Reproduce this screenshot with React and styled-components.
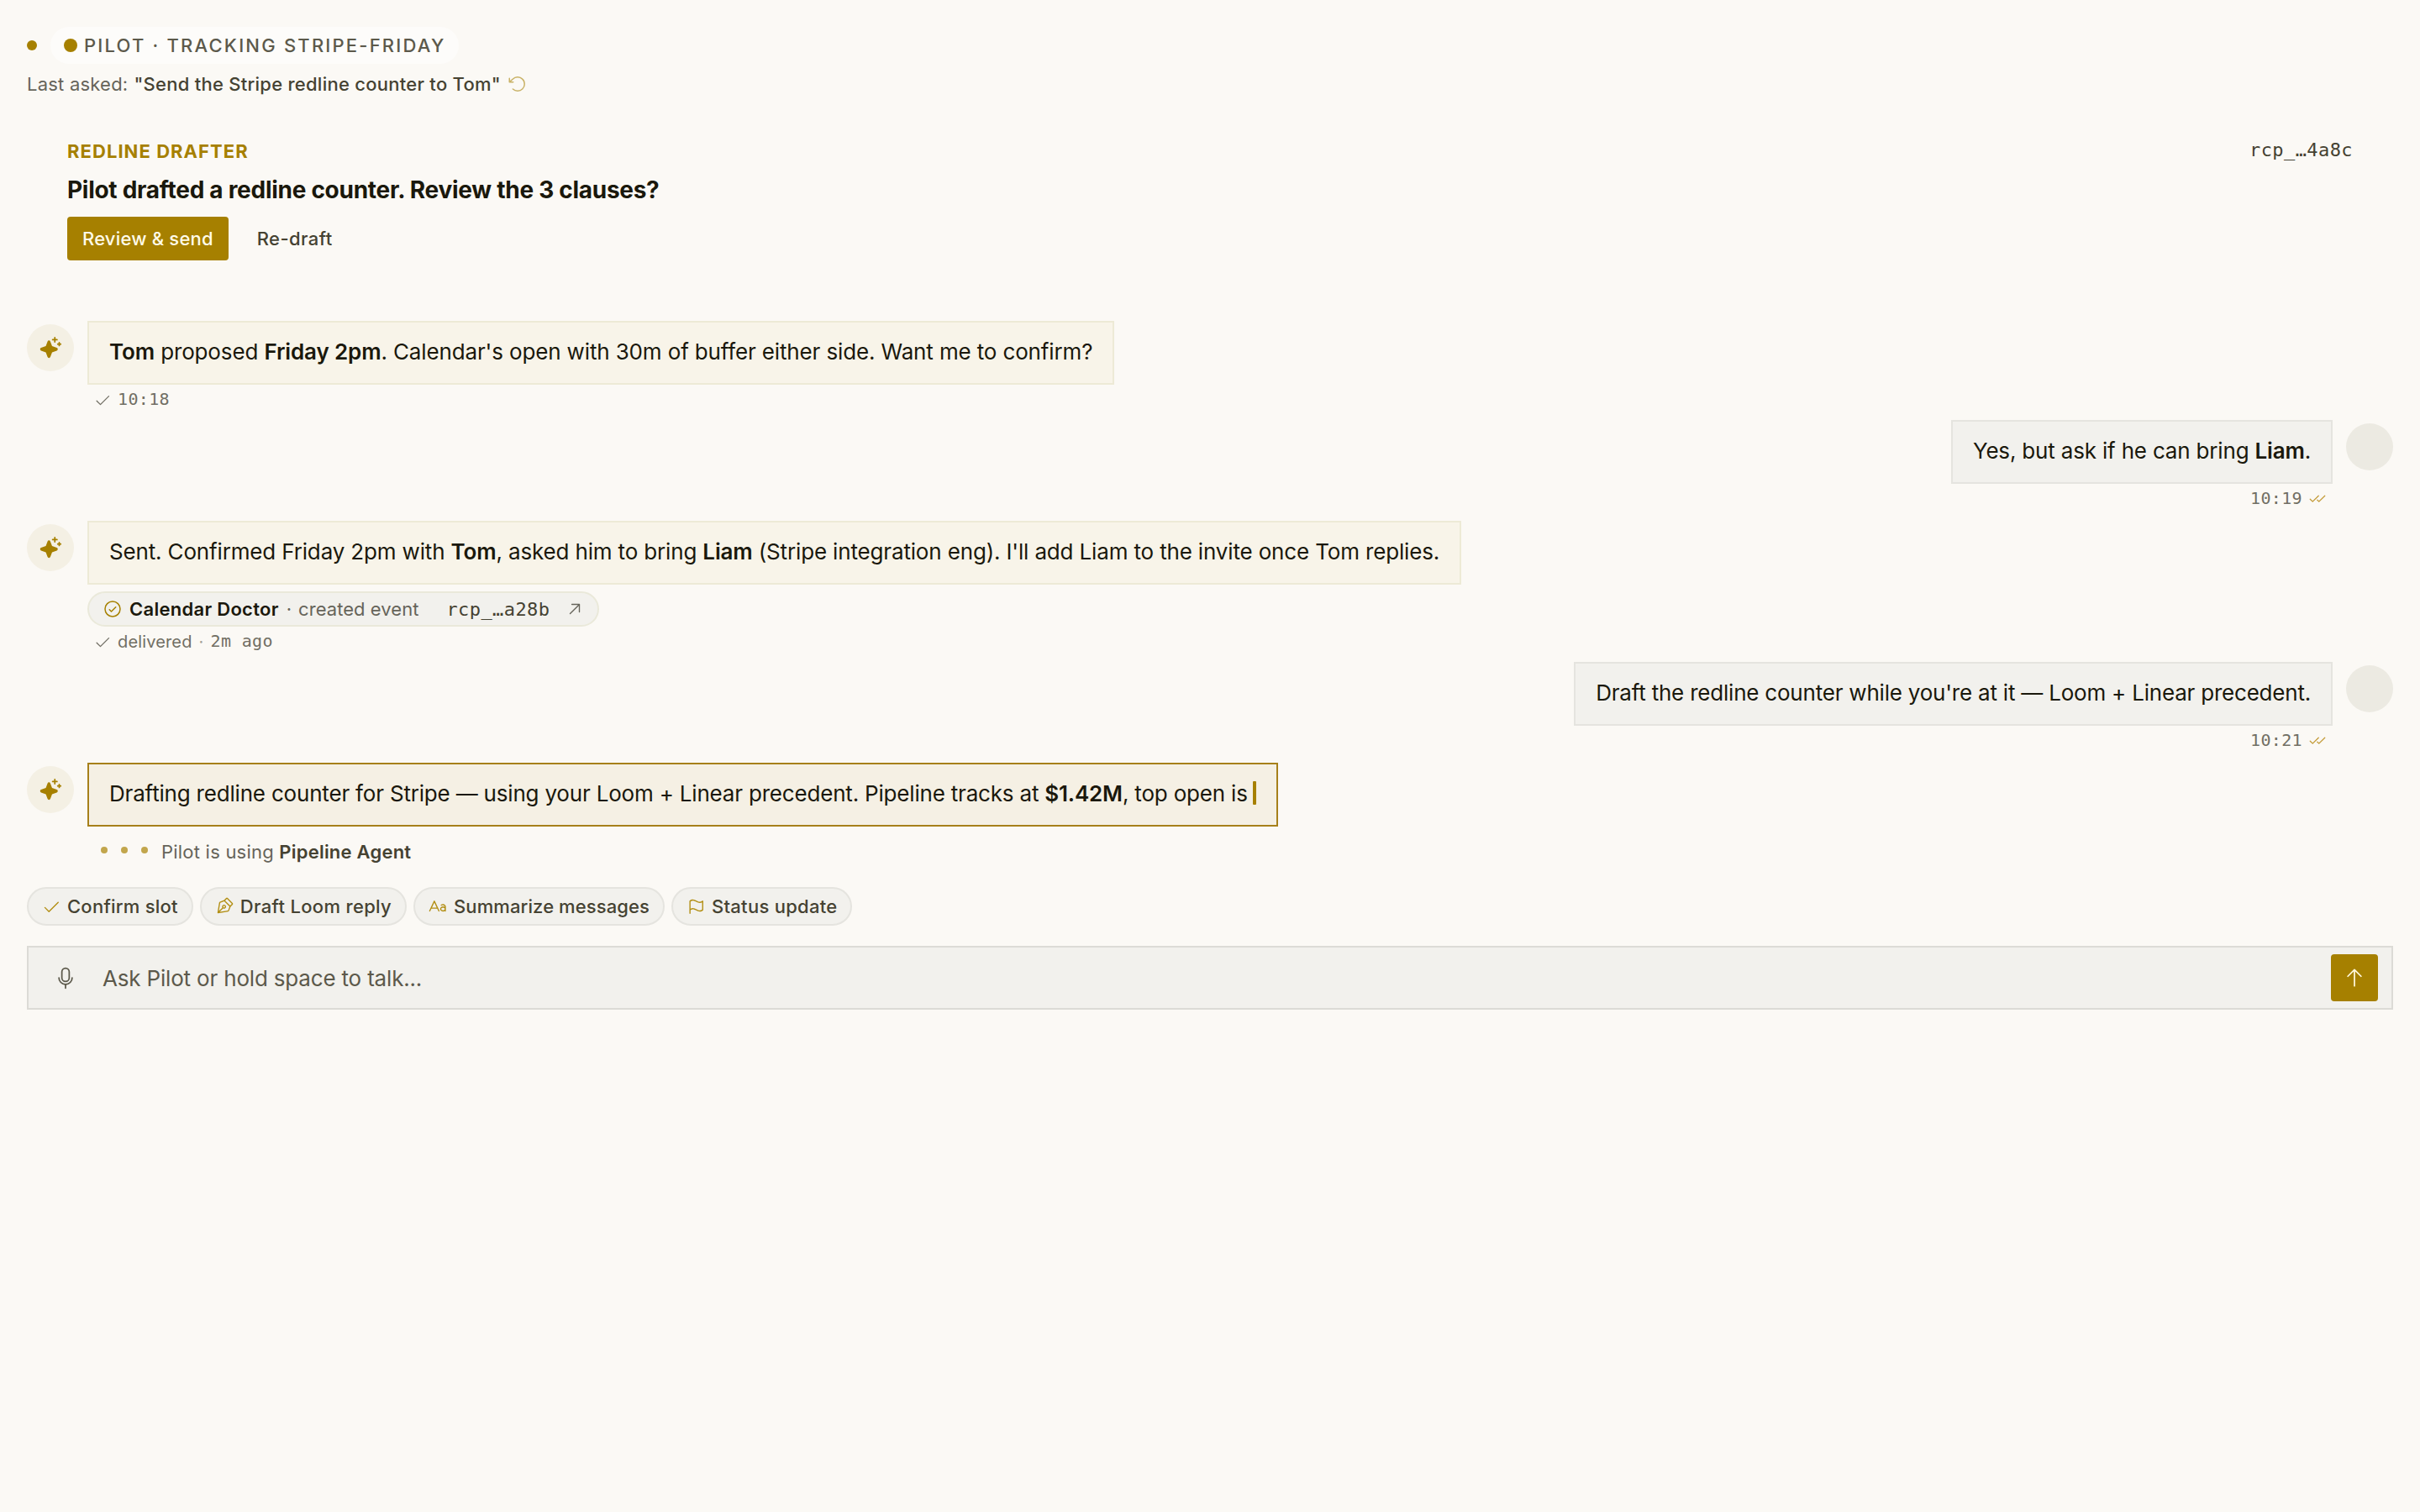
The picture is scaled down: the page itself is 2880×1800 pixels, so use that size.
import React from "react";
import styled, { createGlobalStyle, css } from "styled-components";
import {
  PiArrowCounterClockwise,
  PiArrowUp,
  PiArrowUpRight,
  PiCheckCircle,
  PiCheck,
  PiChecks,
  PiFlag,
  PiMicrophone,
  PiPenNib,
  PiSparkleFill,
  PiTextAa,
} from "react-icons/pi";

const gold = "#a68000";
const ink = "#1a180c";
const inkSoft = "#454232";
const muted = "#66645a";

const GlobalStyle = createGlobalStyle`
  *, *::before, *::after { box-sizing: border-box; }
  body {
    margin: 0;
    background: #fbf9f5;
    color: ${ink};
    font-family: Inter, "Liberation Sans", sans-serif;
    -webkit-font-smoothing: antialiased;
  }
  button { font: inherit; border: 0; margin: 0; }
  svg { display: block; flex: none; }
`;

const Page = styled.main`
  min-height: 1800px;
  padding: 30px 32px 0;
  display: flex;
  flex-direction: column;
`;

const StatusRow = styled.header`
  display: flex;
  align-items: center;
  gap: 16px;
  height: 48px;
`;

const Dot = styled.span`
  width: ${(p) => p.$size}px;
  height: ${(p) => p.$size}px;
  border-radius: 50%;
  background: ${gold};
  flex: none;
`;

const StatusPill = styled.div`
  display: flex;
  align-items: center;
  gap: 8px;
  height: 44px;
  padding: 0 16px;
  border-radius: 22px;
  background: #fdfcfa;
  color: #5c594b;
  font-size: 22px;
  font-weight: 500;
  letter-spacing: 2.2px;
`;

const LastAsked = styled.div`
  display: flex;
  align-items: center;
  height: 44px;
  font-size: 22px;
  color: ${muted};
  letter-spacing: 0.22px;

  q {
    quotes: none;
    margin-left: 7px;
    color: ${inkSoft};
    font-weight: 500;
    letter-spacing: 0.26px;
  }

  svg {
    margin-left: 8px;
    color: #c9b266;
  }
`;

const Suggestion = styled.section`
  display: flex;
  justify-content: space-between;
  align-items: flex-start;
  margin-top: 44px;
  padding: 0 48px;
  height: 216px;
`;

const SuggestionBody = styled.div`
  display: flex;
  flex-direction: column;
  align-items: flex-start;
`;

const Eyebrow = styled.div`
  height: 28px;
  line-height: 28px;
  font-size: 22px;
  font-weight: 700;
  letter-spacing: 1.06px;
  color: ${gold};
`;

const Title = styled.h2`
  margin: 12px 0 12px;
  height: 40px;
  line-height: 40px;
  font-size: 28px;
  font-weight: 700;
  letter-spacing: -0.28px;
`;

const Actions = styled.div`
  display: flex;
  gap: 16px;
`;

const Button = styled.button`
  height: 52px;
  padding: 0 18px;
  border-radius: 4px;
  font-size: 22px;
  font-weight: 500;
  letter-spacing: ${(p) => (p.$primary ? 0.2 : 0.4)}px;
  color: ${(p) => (p.$primary ? "#fffbe8" : inkSoft)};
  background: ${(p) => (p.$primary ? gold : "transparent")};
`;

const Mono = styled.span`
  font-family: "DejaVu Sans Mono", "Liberation Mono", monospace;
  font-size: ${(p) => (p.$large ? 22 : 20)}px;
  letter-spacing: ${(p) => (p.$large ? 0.42 : 0.36)}px;
  color: ${(p) => (p.$large ? inkSoft : "inherit")};
`;

const Thread = styled.div`
  display: flex;
  flex-direction: column;
`;

const Message = styled.article`
  display: flex;
  flex-direction: ${(p) => (p.$mine ? "row-reverse" : "row")};
  align-items: flex-start;
  gap: 16px;
  height: ${(p) => p.$height}px;
`;

const Avatar = styled.div`
  display: flex;
  align-items: center;
  justify-content: center;
  width: 56px;
  height: 56px;
  margin-top: 4px;
  border-radius: 50%;
  color: ${gold};
  background: ${(p) => (p.$mine ? "#eceae2" : "#f4f0e4")};
`;

const Column = styled.div`
  display: flex;
  flex-direction: column;
  align-items: ${(p) => (p.$mine ? "flex-end" : "flex-start")};
`;

const bubbleTones = {
  pilot: css`
    background: #f8f4e9;
    border-color: #edead6;
  `,
  mine: css`
    background: #f2f1ed;
    border-color: #e5e4df;
  `,
  live: css`
    background: #f5f0e4;
    border-color: #a6801a;
  `,
};

const Bubble = styled.div`
  display: flex;
  align-items: center;
  height: 76px;
  padding: 0 24px 2px;
  border: 2px solid;
  font-size: 26px;
  line-height: 40px;
  letter-spacing: ${(p) => p.$track}px;
  white-space: pre;
  ${(p) => bubbleTones[p.$tone]}

  b { font-weight: 600; }
`;

const Caret = styled.span`
  width: 4px;
  height: 28px;
  margin: 0 0 2px 6px;
  border-radius: 1px;
  background: ${gold};
`;

const Meta = styled.div`
  display: flex;
  align-items: center;
  gap: 8px;
  height: 24px;
  margin-top: 6px;
  padding: 0 8px;
  font-size: 20px;
  letter-spacing: 0.15px;
  color: #716f64;

  ${Mono} { padding-bottom: 2px; }
`;

const Separator = styled.span`
  color: #a3a196;
`;

const Receipt = styled.div`
  display: flex;
  align-items: center;
  gap: 8px;
  height: 42px;
  margin-top: 8px;
  padding: 0 16px;
  border: 2px solid #eae9da;
  border-radius: 21px;
  background: #f2f1ed;
  font-size: 22px;
  letter-spacing: 0.05px;
  color: ${muted};

  b {
    margin-right: 1px;
    color: ${ink};
    font-weight: 600;
    letter-spacing: 0.28px;
  }

  svg { margin-bottom: 1px; }

  ${Mono} { margin: 0 11px 0 25px; }
`;

const Activity = styled.div`
  display: flex;
  align-items: center;
  height: 32px;
  margin-top: 14px;
  padding-left: 16px;
  font-size: 22px;
  letter-spacing: 0.22px;
  color: ${muted};
  white-space: pre;

  b {
    color: ${inkSoft};
    font-weight: 600;
  }
`;

const TypingDots = styled.span`
  display: flex;
  gap: 16px;
  margin: -4px 16px 0 0;

  i {
    width: 8px;
    height: 8px;
    border-radius: 50%;
    background: #c2a64c;
  }
`;

const Chips = styled.nav`
  display: flex;
  gap: 8px;
`;

const Chip = styled.button`
  display: flex;
  align-items: center;
  gap: 8px;
  height: 46px;
  padding: 0 16px;
  border: 2px solid #e5e4df;
  border-radius: 23px;
  background: #f2f1ed;
  color: ${inkSoft};
  font-size: 22px;
  font-weight: 500;
  letter-spacing: ${(p) => p.$track}px;

  svg { color: #b28e12; }
`;

const Composer = styled.form`
  display: flex;
  align-items: center;
  height: 76px;
  margin-top: 24px;
  padding: 0 16px 0 30px;
  border: 2px solid #dcdbd6;
  background: #f2f1ed;
  color: #5c594b;
  font-size: 26px;
  letter-spacing: -0.18px;
`;

const Placeholder = styled.span`
  flex: 1;
  margin-left: 30px;
`;

const Send = styled.button`
  display: flex;
  align-items: center;
  justify-content: center;
  width: 56px;
  height: 56px;
  padding: 0;
  border-radius: 4px;
  background: ${gold};
  color: #fff8dc;
`;

const PilotMessage = ({ height, tone = "pilot", track, text, children }) => (
  <Message $height={height}>
    <Avatar>
      <PiSparkleFill size={28} />
    </Avatar>
    <Column>
      <Bubble $tone={tone} $track={track}>{text}</Bubble>
      {children}
    </Column>
  </Message>
);

const MyMessage = ({ height, track, text, time }) => (
  <Message $mine $height={height}>
    <Avatar $mine />
    <Column $mine>
      <Bubble $tone="mine" $track={track}>{text}</Bubble>
      <Meta>
        <Mono>{time}</Mono>
        <PiChecks size={20} color="#c39a36" />
      </Meta>
    </Column>
  </Message>
);

const quickActions = [
  { label: "Confirm slot", Icon: PiCheck, track: 0.24 },
  { label: "Draft Loom reply", Icon: PiPenNib, track: 0.32 },
  { label: "Summarize messages", Icon: PiTextAa, track: 0.1 },
  { label: "Status update", Icon: PiFlag, track: 0.28 },
];

export default function App() {
  return (
    <>
      <GlobalStyle />
      <Page>
        <StatusRow>
          <Dot $size={12} />
          <StatusPill>
            <Dot $size={16} />
            <span>PILOT · TRACKING STRIPE-FRIDAY</span>
          </StatusPill>
        </StatusRow>
        <LastAsked>
          <span>Last asked:</span>
          <q>"Send the Stripe redline counter to Tom"</q>
          <PiArrowCounterClockwise size={24} />
        </LastAsked>

        <Suggestion>
          <SuggestionBody>
            <Eyebrow>REDLINE DRAFTER</Eyebrow>
            <Title>Pilot drafted a redline counter. Review the 3 clauses?</Title>
            <Actions>
              <Button $primary>Review &amp; send</Button>
              <Button>Re-draft</Button>
            </Actions>
          </SuggestionBody>
          <Mono $large>rcp_…4a8c</Mono>
        </Suggestion>

        <Thread>
          <PilotMessage
            height={118}
            track={-0.14}
            text={
              <span>
                <b>Tom</b> proposed <b>Friday 2pm</b>. Calendar's open with 30m of buffer either side. Want me to confirm?
              </span>
            }
          >
            <Meta>
              <PiCheck size={20} />
              <Mono>10:18</Mono>
            </Meta>
          </PilotMessage>

          <MyMessage
            height={120}
            track={-0.18}
            time="10:19"
            text={<span>Yes, but ask if he can bring <b>Liam</b>.</span>}
          />

          <PilotMessage
            height={168}
            track={-0.155}
            text={
              <span>
                Sent. Confirmed Friday 2pm with <b>Tom</b>, asked him to bring <b>Liam</b> (Stripe integration eng). I'll add Liam to the invite once Tom replies.
              </span>
            }
          >
            <Receipt>
              <PiCheckCircle size={24} color={gold} />
              <b>Calendar Doctor</b>
              <span>·</span>
              <span>created event</span>
              <Mono $large>rcp_…a28b</Mono>
              <PiArrowUpRight size={22} />
            </Receipt>
            <Meta>
              <PiCheck size={20} />
              <span>delivered</span>
              <Separator>·</Separator>
              <Mono>2m ago</Mono>
            </Meta>
          </PilotMessage>

          <MyMessage
            height={120}
            track={-0.21}
            time="10:21"
            text={<span>Draft the redline counter while you're at it — Loom + Linear precedent.</span>}
          />

          <PilotMessage
            height={148}
            track={-0.19}
            tone="live"
            text={
              <>
                <span>
                  Drafting redline counter for Stripe — using your Loom + Linear precedent. Pipeline tracks at <b>$1.42M</b>, top open is
                </span>
                <Caret />
              </>
            }
          >
            <Activity>
              <TypingDots>
                <i />
                <i />
                <i />
              </TypingDots>
              <span>Pilot is using <b>Pipeline Agent</b></span>
            </Activity>
          </PilotMessage>
        </Thread>

        <Chips>
          {quickActions.map(({ label, Icon, track }) => (
            <Chip key={label} $track={track}>
              <Icon size={22} />
              {label}
            </Chip>
          ))}
        </Chips>

        <Composer>
          <PiMicrophone size={28} />
          <Placeholder>Ask Pilot or hold space to talk...</Placeholder>
          <Send type="button">
            <PiArrowUp size={28} />
          </Send>
        </Composer>
      </Page>
    </>
  );
}
